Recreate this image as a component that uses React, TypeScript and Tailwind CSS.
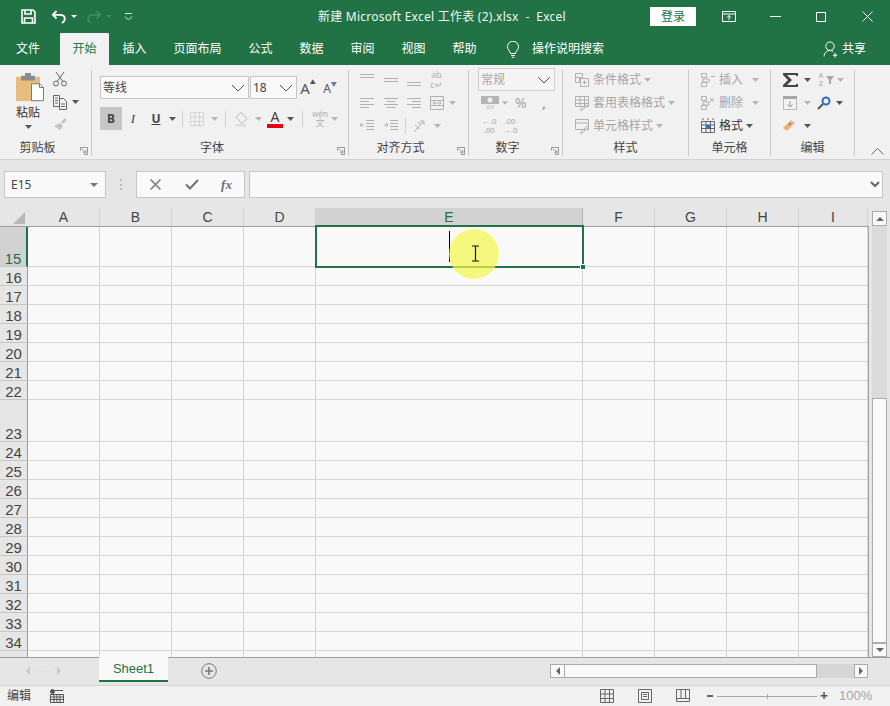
import type { ReactNode } from "react";

const columns = [
  { label: "A", width: "w-[72px]" },
  { label: "B", width: "w-[72px]" },
  { label: "C", width: "w-[72px]" },
  { label: "D", width: "w-[72px]" },
  { label: "E", width: "w-[267px]", active: true },
  { label: "F", width: "w-[72px]" },
  { label: "G", width: "w-[72px]" },
  { label: "H", width: "w-[72px]" },
  { label: "I", width: "w-[69px]" },
];

const rows = [
  { label: "15", height: "h-[40px]", active: true },
  ...["16", "17", "18", "19", "20", "21", "22"].map((label) => ({ label, height: "h-[19px]", active: false })),
  { label: "23", height: "h-[42px]", active: false },
  ...["24", "25", "26", "27", "28", "29", "30", "31", "32", "33", "34", "35"].map((label) => ({
    label,
    height: "h-[19px]",
    active: false,
  })),
];

const topTabs = ["插入", "页面布局", "公式", "数据", "审阅", "视图", "帮助"];

function Caret({ dim }: { dim?: boolean }) {
  return (
    <svg width="7" height="4" viewBox="0 0 7 4" className={dim ? "text-[#b5b5b5]" : "text-[#555555]"}>
      <path d="M0 0h7L3.5 4z" fill="currentColor" />
    </svg>
  );
}

function Chevron() {
  return (
    <svg width="14" height="8" viewBox="0 0 14 8" fill="none" stroke="#555555">
      <path d="M1 1l6 6 6-6" />
    </svg>
  );
}

function Launcher() {
  return (
    <svg width="8" height="8" viewBox="0 0 9 9" fill="none" stroke="#8a8a8a">
      <path d="M.5 4V.5H8.500V8.500H4.500" />
      <path d="M2 2l4.500 4.500M6.500 3.500v3h-3" />
    </svg>
  );
}

function Lines({ d, color = "#b0b0b0" }: { d: string; color?: string }) {
  return (
    <svg width="16" height="16" viewBox="0 0 16 16" fill="none" stroke={color}>
      <path d={d} />
    </svg>
  );
}

function Group({
  width,
  label,
  launcher,
  children,
}: {
  width: string;
  label: string;
  launcher?: boolean;
  children: ReactNode;
}) {
  return (
    <>
      <div className={`${width} relative flex h-[91px] flex-col pt-[3px]`}>
        <div className="h-[72px]">{children}</div>
        <div className={`h-[16px] text-center text-[12px] leading-[16px] text-[#444444] ${launcher ? "pr-[16px]" : ""}`}>
          {label}
        </div>
        {launcher && (
          <div className="absolute bottom-[1px] right-[3px] flex">
            <Launcher />
          </div>
        )}
      </div>
      <div className="mt-[5px] h-[86px] w-px bg-[#c8c8c8]" />
    </>
  );
}

function Row({ className = "", children }: { className?: string; children: ReactNode }) {
  return <div className={`flex h-[23px] items-center ${className}`}>{children}</div>;
}

function Slot({ width, children }: { width: string; children: ReactNode }) {
  return <div className={`${width} flex shrink-0 items-center justify-center`}>{children}</div>;
}

function TitleBar() {
  return (
    <div className="flex h-[33px] items-center bg-[#217346] text-white">
      <div className="flex w-[318px] items-center">
        <div className="ml-[21px] flex">
          <svg width="15" height="15" viewBox="0 0 15 15" fill="none" stroke="white" strokeWidth="1.6">
            <path d="M1 1h11l2 2v11H1z" />
            <path d="M4 1v4h6V1M3.500 14V9h8v5" />
          </svg>
        </div>
        <div className="ml-[15px] flex items-center gap-[4px]">
          <svg width="16" height="14" viewBox="0 0 16 14" fill="none" stroke="white" strokeWidth="1.8">
            <path d="M5.500 1L1.800 4.800l3.700 3.700M2 4.800h7c3 0 4.800 1.800 4.800 4 0 2-1.300 3.400-3 4.200" />
          </svg>
          <svg width="6" height="3" viewBox="0 0 6 3">
            <path d="M0 0h6L3 3z" fill="white" />
          </svg>
        </div>
        <div className="ml-[9px] flex items-center gap-[4px]">
          <svg width="16" height="14" viewBox="0 0 16 14" fill="none" stroke="#3f8b63" strokeWidth="1.8">
            <path d="M10.500 1l3.700 3.800-3.700 3.700M14 4.800H7c-3 0-4.800 1.800-4.800 4 0 2 1.300 3.400 3 4.200" />
          </svg>
          <svg width="6" height="3" viewBox="0 0 6 3">
            <path d="M0 0h6L3 3z" fill="#3f8b63" />
          </svg>
        </div>
        <div className="ml-[12px] flex">
          <svg width="9" height="8" viewBox="0 0 9 8" fill="none" stroke="#d5e6dc">
            <path d="M1 .5h7M1 3.500l3.500 3.500L8 3.500" />
          </svg>
        </div>
      </div>
      <div className="w-[332px] whitespace-pre text-[12px] leading-[16px] tracking-[0.25px] text-[#f1f7f3]">
        新建 Microsoft Excel 工作表 (2).xlsx  -  Excel
      </div>
      <div className="flex h-[19px] w-[46px] items-center justify-center bg-white text-[12px] text-[#217346]">登录</div>
      <div className="ml-[26px] flex">
        <svg width="14" height="11" viewBox="0 0 14 11" fill="none" stroke="white">
          <path d="M.5.5h13v10H.5zM.5 3h13M7 9V4.500M5 6.500l2-2 2 2" />
        </svg>
      </div>
      <div className="ml-[34px] h-px w-[11px] bg-white" />
      <div className="ml-[35px] h-[10px] w-[10px] border border-white" />
      <div className="ml-[36px] flex">
        <svg width="11" height="11" viewBox="0 0 11 11" stroke="white">
          <path d="M.5.5l10 10M10.500.5l-10 10" />
        </svg>
      </div>
    </div>
  );
}

function TabBar() {
  return (
    <div className="flex h-[32px] bg-[#217346] text-[12px] leading-[16px] text-white">
      <div className="flex w-[60px] items-center pl-[16px]">文件</div>
      <div className="flex w-[49px] items-center justify-center rounded-t-[1px] bg-[#f1f1f1] text-[#217346]">开始</div>
      {topTabs.map((tab) => (
        <div key={tab} className="flex items-center px-[13.5px]">
          {tab}
        </div>
      ))}
      <div className="ml-[16px] flex items-center">
        <svg width="14" height="17" viewBox="0 0 14 17" fill="none" stroke="white">
          <path d="M4.500 12.500c0-2-3-3.500-3-6.800a5.500 5.500 0 0 1 11 0c0 3.300-3 4.800-3 6.800zM5 14.500h4M5.800 16.300h2.400" />
        </svg>
      </div>
      <div className="ml-[12px] flex items-center">操作说明搜索</div>
      <div className="ml-auto mr-[24px] flex items-center gap-[3px]">
        <svg width="16" height="17" viewBox="0 0 16 17" fill="none" stroke="white">
          <path d="M7 1a4.200 4.200 0 1 1 0 8.400A4.200 4.200 0 0 1 7 1zM1 15.500c.3-3.500 2.600-6 6-6 1.300 0 2.400.3 3.200 1M12 12v4.500M9.800 14.200h4.500" />
        </svg>
        <span>共享</span>
      </div>
    </div>
  );
}

function Ribbon() {
  return (
    <div className="flex h-[95px] border-b border-[#d2d2d2] bg-[#f1f1f1] text-[12px]">
      <Group width="w-[91px]" label="剪贴板" launcher>
        <div className="flex pt-[5px]">
          <div className="flex w-[48px] flex-col items-center pl-[8px]">
            <svg width="28" height="30" viewBox="0 0 28 32" preserveAspectRatio="none" className="ml-[4px]">
              <path d="M0 4h24v26H0z" fill="#e6bd7e" />
              <path d="M5 3h14v5H5z" fill="#8c8c8c" />
              <path d="M9 0h6v4H9z" fill="#8c8c8c" />
              <path d="M15.500 11.500h8l4 4v14h-12z" fill="white" stroke="#777777" />
              <path d="M23.500 11.500v4h4" fill="none" stroke="#777777" />
            </svg>
            <div className="mt-[2px] text-[12px] leading-[16px] text-[#333333]">粘贴</div>
            <div className="mt-[4px] flex">
              <Caret />
            </div>
          </div>
          <div className="mt-[-2px] flex flex-col items-start pl-[4px]">
            <svg width="16" height="16" viewBox="0 0 16 16" fill="none" stroke="#666666">
              <path d="M4 1l6.500 9M12 1L5.500 10" />
              <circle cx="4" cy="12.500" r="2.500" />
              <circle cx="12" cy="12.500" r="2.500" />
            </svg>
            <div className="mt-[7px] flex items-center gap-[4px]">
              <svg width="16" height="16" viewBox="0 0 16 16" fill="none" stroke="#666666">
                <path d="M1.500 1.500h6v11h-6zM7.500 4.500h4l3 3v8h-7zM3 4h3M3 6.500h3M3 9h3M9 10h4M9 12.500h4" />
              </svg>
              <Caret />
            </div>
            <div className="mt-[6px] flex">
              <svg width="16" height="16" viewBox="0 0 16 16">
                <path d="M9 6l4-4 2 2-4 4zM8 7l3 3-3 4-6-4z" fill="#c4c4c4" />
              </svg>
            </div>
          </div>
        </div>
      </Group>

      <Group width="w-[256px]" label="字体" launcher>
        <div className="pl-[8px] pt-[8px]">
          <div className="flex h-[23px]">
            <div className="flex w-[149px] items-center justify-between border border-[#c6c6c6] bg-[#f9f9f9] pl-[2px] pr-[3px] text-[#444444]">
              <span>等线</span>
              <Chevron />
            </div>
            <div className="ml-[1px] flex w-[47px] items-center justify-between border border-[#c6c6c6] bg-[#f9f9f9] pl-[2px] pr-[3px] text-[#444444]">
              <span>18</span>
              <Chevron />
            </div>
            <div className="flex w-[22px] items-start justify-center pt-[2px] text-[15px] leading-[20px] text-[#555555]">
              A<span className="text-[6px] leading-[8px] text-[#555555]">▲</span>
            </div>
            <div className="flex w-[22px] items-start justify-center pt-[4px] text-[12px] leading-[18px] text-[#555555]">
              A<span className="text-[6px] leading-[8px] text-[#5f7d99]">▼</span>
            </div>
          </div>
          <div className="mt-[8px] flex h-[23px] items-center">
            <div className="flex h-[23px] w-[22px] items-center justify-center bg-[#c6c6c6] text-[12px] font-bold text-[#444444]">B</div>
            <Slot width="w-[22px]">
              <span className="font-['Liberation_Serif',serif] text-[13px] italic text-[#444444]">I</span>
            </Slot>
            <Slot width="w-[24px]">
              <span className="text-[12px] font-bold leading-[14px] text-[#444444] underline">U</span>
            </Slot>
            <Slot width="w-[8px]">
              <Caret />
            </Slot>
            <div className="ml-[6px] h-[16px] w-px bg-[#d0d0d0]" />
            <Slot width="w-[28px]">
              <svg width="14" height="14" viewBox="0 0 14 14" fill="none" stroke="#bdbdbd" strokeDasharray="1 1">
                <path d="M.5.5h13v13H.5zM.5 5h13M.5 9.500h13M5 .5v13M9.500.5v13" />
              </svg>
            </Slot>
            <Slot width="w-[7px]">
              <Caret dim />
            </Slot>
            <div className="ml-[7px] h-[16px] w-px bg-[#d0d0d0]" />
            <Slot width="w-[26px] ml-[3px]">
              <svg width="16" height="16" viewBox="0 0 16 16" fill="none" stroke="#b5b5b5">
                <path d="M7 1.500l6 6-5 5-6-6z" />
                <path d="M1 13h11v2.500H1z" fill="#dcdcdc" stroke="none" />
              </svg>
            </Slot>
            <Slot width="w-[7px]">
              <Caret dim />
            </Slot>
            <div className="ml-[5px] flex flex-col items-center">
              <span className="text-[14px] leading-[15px] text-[#444444]">A</span>
              <span className="h-[4px] w-[16px] bg-[#e60012]" />
            </div>
            <Slot width="w-[15px]">
              <Caret />
            </Slot>
            <div className="ml-[4px] h-[16px] w-px bg-[#d0d0d0]" />
            <div className="ml-[8px] flex w-[18px] flex-col items-center">
              <span className="text-[8px] leading-[9px] text-[#b0b0b0]">wén</span>
              <span className="text-[9px] leading-[10px] text-[#b0b0b0]">文</span>
            </div>
            <Slot width="w-[10px]">
              <Caret dim />
            </Slot>
          </div>
        </div>
      </Group>

      <Group width="w-[119px]" label="对齐方式" launcher>
        <div className="pl-[10px]">
          <Row>
            <Slot width="w-[16px]">
              <Lines d="M1 2.500h14M1 5.500h14" />
            </Slot>
            <Slot width="w-[23px] ml-[4px]">
              <Lines d="M1 6.500h14M1 9.500h14" />
            </Slot>
            <Slot width="w-[23px]">
              <Lines d="M1 10.500h14M1 13.500h14" />
            </Slot>
            <Slot width="w-[23px]">
              <div className="flex flex-col items-center text-[9px] leading-[10px] text-[#b0b0b0]">
                <span>ab</span>
                <span>c↵</span>
              </div>
            </Slot>
          </Row>
          <Row>
            <Slot width="w-[16px]">
              <Lines d="M1 3.500h14M1 6.500h9M1 9.500h14M1 12.500h9" />
            </Slot>
            <Slot width="w-[23px] ml-[4px]">
              <Lines d="M1 3.500h14M3.500 6.500h9M1 9.500h14M3.500 12.500h9" />
            </Slot>
            <Slot width="w-[23px]">
              <Lines d="M1 3.500h14M6 6.500h9M1 9.500h14M6 12.500h9" />
            </Slot>
            <Slot width="w-[23px]">
              <Lines d="M1.500 1.500h13v13h-13zM1.500 5.500h13M1.500 10.500h13M4 8h8M4 8l1.500-1.500M4 8l1.500 1.500M12 8l-1.500-1.500M12 8l-1.500 1.500" />
            </Slot>
            <Slot width="w-[8px]">
              <Caret dim />
            </Slot>
          </Row>
          <Row>
            <Slot width="w-[16px]">
              <Lines d="M7 2.500h8M7 5.500h8M7 8.500h8M7 11.500h8M1 7h4M1 7l2-2M1 7l2 2" />
            </Slot>
            <Slot width="w-[23px] ml-[4px]">
              <Lines d="M7 2.500h8M7 5.500h8M7 8.500h8M7 11.500h8M1 7h4M5 7L3 5M5 7L3 9" />
            </Slot>
            <div className="ml-[3px] h-[16px] w-px bg-[#d0d0d0]" />
            <Slot width="w-[26px] ml-[1px]">
              <Lines d="M2 14L12 3M12 3H8M12 3v4M3 7l4 4M6 4l3 2" />
            </Slot>
            <Slot width="w-[8px]">
              <Caret dim />
            </Slot>
          </Row>
        </div>
      </Group>

      <Group width="w-[93px]" label="数字" launcher>
        <div className="pl-[9px]">
          <div className="flex h-[23px] w-[77px] items-center justify-between border border-[#d0d0d0] bg-[#f4f4f4] pl-[2px] pr-[3px] text-[#a6a6a6]">
            <span>常规</span>
            <Chevron />
          </div>
          <Row>
            <Slot width="w-[24px]">
              <svg width="20" height="16" viewBox="0 0 20 16">
                <path d="M1 1h18v8H1z" fill="#b5b5b5" />
                <circle cx="10" cy="5" r="2.500" fill="#f1f1f1" />
                <path d="M6 11h8M6 13h8" stroke="#c8c8c8" />
              </svg>
            </Slot>
            <Slot width="w-[6px]">
              <Caret dim />
            </Slot>
            <span className="ml-[7px] w-[16px] text-[14px] leading-[16px] text-[#a6a6a6]">%</span>
            <span className="ml-[11px] text-[14px] font-bold leading-[14px] text-[#a6a6a6]">,</span>
          </Row>
          <Row>
            <div className="w-[22px] text-center font-['Liberation_Sans',sans-serif] text-[8px] leading-[9px] text-[#a6a6a6]">
              ←.0
              <br />
              .00
            </div>
            <div className="w-[20px] text-center font-['Liberation_Sans',sans-serif] text-[8px] leading-[9px] text-[#a6a6a6]">
              .00
              <br />
              →.0
            </div>
          </Row>
        </div>
      </Group>

      <Group width="w-[125px]" label="样式">
        <div className="pl-[11px] text-[#a6a6a6]">
          <Row className="gap-[3px]">
            <Lines d="M1.500 1.500h7v4h-7zM1.500 5.500h4v5h-4zM6.500 6.500h8v8h-8zM8.500 10.500h4M10.500 8.500v4" />
            <span>条件格式</span>
            <Caret dim />
          </Row>
          <Row className="gap-[3px]">
            <Lines d="M1.500 1.500h13v10h-13zM1.500 5h13M1.500 8.500h13M6 1.500v10M10.500 1.500v10M6 15l7-7 1.500 1.500-7 6z" />
            <span>套用表格格式</span>
            <Caret dim />
          </Row>
          <Row className="gap-[3px]">
            <Lines d="M1.500 1.500h13v10h-13zM1.500 5h13M6 15l7-7 1.500 1.500-7 6z" />
            <span>单元格样式</span>
            <Caret dim />
          </Row>
        </div>
      </Group>

      <Group width="w-[81px]" label="单元格">
        <div className="pl-[11px]">
          <Row className="gap-[3px] text-[#a6a6a6]">
            <Lines d="M1.500 1.500h5v4h-5zM1.500 10.500h5v4h-5zM3 7h6v3H3zM11 4.500h4" />
            <span>插入</span>
            <span className="ml-[6px] flex">
              <Caret dim />
            </span>
          </Row>
          <Row className="gap-[3px] text-[#a6a6a6]">
            <Lines d="M1.500 1.500h5v4h-5zM1.500 10.500h5v4h-5zM3 7h6v3H3zM10 3l4 4M14 3l-4 4" />
            <span>删除</span>
            <span className="ml-[6px] flex">
              <Caret dim />
            </span>
          </Row>
          <Row className="gap-[3px] text-[#333333]">
            <svg width="16" height="16" viewBox="0 0 16 16" fill="none" stroke="#666666">
              <path d="M1.500 3.500h13v11h-13zM1.500 7h13M1.500 10.500h13M6 3.500v11M10.500 3.500v11M2 1h2M7 1h2M12 1h2" />
              <path d="M6 7h4.500v3.500H6z" fill="#2b6fc2" stroke="none" />
            </svg>
            <span>格式</span>
            <Caret />
          </Row>
        </div>
      </Group>

      <Group width="w-[83px]" label="编辑">
        <div className="pl-[11px]">
          <Row>
            <svg width="17" height="16" viewBox="0 0 17 16">
              <path d="M1 1h15v3h-2V3H5l5 5-5 5h9v-1h2v3H1v-2l5-5-5-5z" fill="#444444" />
            </svg>
            <span className="ml-[5px] flex">
              <Caret />
            </span>
            <span className="ml-[5px] flex w-[10px] flex-col items-center text-[7px] leading-[8px] text-[#a6a6a6]">
              <span>A</span>
              <span>Z</span>
            </span>
            <svg width="8" height="8" viewBox="0 0 8 8">
              <path d="M0 0h8L5 4v4H3V4z" fill="#a6a6a6" />
            </svg>
            <span className="ml-[3px] flex">
              <Caret dim />
            </span>
          </Row>
          <Row>
            <svg width="16" height="16" viewBox="0 0 16 16" fill="none">
              <path d="M1.500 1.500h13v13h-13z" stroke="#bcbcbc" />
              <path d="M1 1h14v3H1z" fill="#a6a6a6" />
              <path d="M8 6v6M5.500 9.500L8 12l2.500-2.500" stroke="#9a9a9a" />
            </svg>
            <span className="ml-[6px] flex">
              <Caret dim />
            </span>
            <span className="ml-[6px] flex">
              <svg width="14" height="14" viewBox="0 0 14 14" fill="none">
                <circle cx="9" cy="5" r="3.500" stroke="#2b6fc2" strokeWidth="2" />
                <path d="M6 8l-5 5" stroke="#555555" strokeWidth="2" />
              </svg>
            </span>
            <span className="ml-[5px] flex">
              <Caret />
            </span>
          </Row>
          <Row>
            <svg width="16" height="16" viewBox="0 0 16 16">
              <path d="M1 10l8-8 4 3-8 8z" fill="#e8b56b" />
              <path d="M6 6l3-3 3 3-3 3z" fill="#c9c9c9" />
              <circle cx="8" cy="6" r="1.500" fill="#d56a7a" />
            </svg>
            <span className="ml-[6px] flex">
              <Caret />
            </span>
          </Row>
        </div>
      </Group>

      <div className="flex flex-1 items-end justify-end pb-[4px] pr-[6px]">
        <svg width="13" height="7" viewBox="0 0 13 7" fill="none" stroke="#666666">
          <path d="M.5 6.500l6-6 6 6" />
        </svg>
      </div>
    </div>
  );
}

function FormulaBar() {
  return (
    <div className="flex h-[48px] items-start bg-[#e6e6e6] pt-[11px]">
      <div className="ml-[4px] flex h-[27px] w-[102px] items-center justify-between border border-[#c6c6c6] bg-[#f9f9f9] pl-[6px] pr-[7px] text-[12px] text-[#444444]">
        <span>E15</span>
        <svg width="8" height="4" viewBox="0 0 8 4">
          <path d="M0 0h8L4 4z" fill="#777777" />
        </svg>
      </div>
      <div className="ml-[14px] mt-[8px] flex h-[11px] flex-col justify-between">
        <span className="h-[2px] w-[2px] bg-[#bdbdbd]" />
        <span className="h-[2px] w-[2px] bg-[#bdbdbd]" />
        <span className="h-[2px] w-[2px] bg-[#bdbdbd]" />
      </div>
      <div className="ml-[14px] flex h-[27px] w-[109px] items-center border border-[#c6c6c6] bg-[#f9f9f9]">
        <Slot width="w-[37px]">
          <svg width="11" height="11" viewBox="0 0 11 11" stroke="#7a7a7a" strokeWidth="1.500">
            <path d="M.5.5l10 10M10.500.5l-10 10" />
          </svg>
        </Slot>
        <Slot width="w-[35px]">
          <svg width="14" height="11" viewBox="0 0 14 11" fill="none" stroke="#6f6f6f" strokeWidth="2">
            <path d="M1 5.500l4 4 8-8.500" />
          </svg>
        </Slot>
        <Slot width="w-[35px]">
          <span className="font-['Liberation_Serif',serif] text-[13px] font-bold italic text-[#6f6f6f]">fx</span>
        </Slot>
      </div>
      <div className="ml-[4px] flex h-[27px] w-[634px] items-center justify-end border border-[#c6c6c6] bg-[#f9f9f9] pr-[2px]">
        <svg width="10" height="7" viewBox="0 0 10 7" fill="none" stroke="#666666" strokeWidth="2">
          <path d="M1 1l4 4 4-4" />
        </svg>
      </div>
    </div>
  );
}

function Sheet() {
  return (
    <div className="flex h-[449px] bg-[#e6e6e6]">
      <div className="relative w-[869px] overflow-hidden">
        <div className="flex h-[19px] border-b border-[#9c9c9c] font-['Liberation_Sans',sans-serif] text-[14px] leading-[19px]">
          <div className="flex w-[28px] items-end justify-end pb-[2px] pr-[3px]">
            <svg width="12" height="12" viewBox="0 0 12 12">
              <path d="M12 0v12H0z" fill="#b8b8b8" />
            </svg>
          </div>
          {columns.map((c) => (
            <div
              key={c.label}
              className={`${c.width} shrink-0 text-center ${
                c.active ? "border-r border-[#b5b5b5] bg-[#d2d2d2] text-[#2a6b48]" : "border-r border-[#cfcfcf] text-[#444444]"
              }`}
            >
              {c.label}
            </div>
          ))}
        </div>
        <div className="h-[430px] overflow-hidden border-r border-[#a6a6a6] font-['Liberation_Sans',sans-serif]">
          {rows.map((r) => (
            <div key={r.label} className={`flex ${r.height}`}>
              <div
                className={`flex w-[28px] shrink-0 items-end justify-center border-b border-b-[#c6c6c6] text-[15px] leading-[15px] ${
                  r.active
                    ? "border-r-2 border-r-[#217346] bg-[#d2d2d2] text-[#2a6b48]"
                    : "border-r border-r-[#9c9c9c] text-[#444444]"
                }`}
              >
                {r.label}
              </div>
              {columns.map((c) => (
                <div key={c.label} className={`${c.width} shrink-0 border-b border-r border-[#d4d4d4] bg-[#f9f9f9]`} />
              ))}
            </div>
          ))}
        </div>
        <div className="absolute left-[315px] top-[17px] h-[43px] w-[269px] border-2 border-[#217346]" />
        <div className="absolute left-[580px] top-[56px] h-[6px] w-[6px] border border-[#f9f9f9] bg-[#217346]" />
        <div className="absolute left-[449px] top-[23px] h-[31px] w-px bg-black" />
        <div className="absolute left-[449px] top-[21px] h-[50px] w-[50px] rounded-full bg-[#f5f84a]/70" />
        <div className="absolute left-[471px] top-[37px] flex">
          <svg width="9" height="17" viewBox="0 0 9 17" fill="none" stroke="#111111" strokeWidth="1.200">
            <path d="M1 1h7M1 16h7M4.500 1v15" />
          </svg>
        </div>
      </div>
      <div className="flex w-[21px] flex-col px-[3px] pt-[3px]">
        <div className="flex h-[15px] items-center justify-center border border-[#ababab] bg-[#f9f9f9]">
          <svg width="8" height="4" viewBox="0 0 8 4">
            <path d="M4 0l4 4H0z" fill="#666666" />
          </svg>
        </div>
        <div className="h-[172px] bg-[#dadada]" />
        <div className="h-[245px] border border-[#ababab] bg-[#f9f9f9]" />
        <div className="flex h-[14px] items-center justify-center border border-[#ababab] bg-[#f9f9f9]">
          <svg width="8" height="4" viewBox="0 0 8 4">
            <path d="M0 0h8L4 4z" fill="#666666" />
          </svg>
        </div>
      </div>
    </div>
  );
}

function SheetTabs() {
  return (
    <div className="flex h-[28px] items-start border-t border-[#9c9c9c] bg-[#e6e6e6]">
      <div className="flex h-[25px] w-[99px] items-center pl-[26px]">
        <svg width="36" height="8" viewBox="0 0 36 8">
          <path d="M4 0v8L0 4zM31 0l4 4-4 4z" fill="#c8c8c8" />
          <path d="M8 4h18" stroke="#dcdcdc" />
        </svg>
      </div>
      <div className="mt-[-1px] flex h-[25px] w-[69px] items-center justify-center border-b-2 border-[#217346] bg-[#f9f9f9] font-['Liberation_Sans',sans-serif] text-[13px] text-[#217346]">
        Sheet1
      </div>
      <div className="ml-[33px] mt-[5px] flex">
        <svg width="16" height="16" viewBox="0 0 16 16" fill="none" stroke="#777777">
          <circle cx="8" cy="8" r="7.300" />
          <path d="M8 4v8M4 8h8" strokeWidth="1.600" />
        </svg>
      </div>
      <div className="ml-[333px] mt-[6px] flex h-[14px] w-[318px] bg-[#d6d6d6]">
        <div className="flex w-[15px] items-center justify-center border border-[#ababab] bg-[#f9f9f9]">
          <svg width="4" height="8" viewBox="0 0 4 8">
            <path d="M4 0v8L0 4z" fill="#666666" />
          </svg>
        </div>
        <div className="w-[252px] border-y border-r border-[#ababab] bg-[#f9f9f9]" />
        <div className="flex-1" />
        <div className="flex w-[14px] items-center justify-center border border-[#ababab] bg-[#f9f9f9]">
          <svg width="4" height="8" viewBox="0 0 4 8">
            <path d="M0 0l4 4-4 4z" fill="#666666" />
          </svg>
        </div>
      </div>
    </div>
  );
}

function StatusBar() {
  return (
    <div className="flex h-[21px] items-center border-t border-[#d2d2d2] bg-[#f1f1f1] text-[12px] text-[#444444]">
      <span className="ml-[7px] w-[24px]">编辑</span>
      <span className="ml-[19px] flex">
        <svg width="14" height="14" viewBox="0 0 14 14" fill="none" stroke="#555555">
          <circle cx="2.500" cy="2.500" r="2" fill="#555555" />
          <path d="M5 1.500h8M.5 5.500h13v8H.5zM.5 8h13M.5 10.500h13M4 5.500v8M7 5.500v8M10 5.500v8" />
        </svg>
      </span>
      <span className="ml-[536px] flex">
        <svg width="14" height="14" viewBox="0 0 14 14" fill="none" stroke="#666666">
          <path d="M.5.5h13v13H.5zM.5 5h13M.5 9.500h13M5 .5v13M9.500.5v13" />
        </svg>
      </span>
      <span className="ml-[24px] flex">
        <svg width="14" height="14" viewBox="0 0 14 14" fill="none" stroke="#666666">
          <path d="M.5.5h13v13H.5zM3.500 3.500h7v7h-7zM5 5.500h4M5 7.500h4" />
        </svg>
      </span>
      <span className="ml-[24px] flex">
        <svg width="14" height="14" viewBox="0 0 14 14" fill="none" stroke="#666666">
          <path d="M.5.500h13v12H.5zM.5 9.500h13M5 .5v9M9.500.5v9" />
        </svg>
      </span>
      <span className="ml-[17px] h-[2px] w-[6px] bg-[#666666]" />
      <span className="relative ml-[4px] h-px w-[100px] bg-[#a8a8a8]">
        <span className="absolute left-1/2 top-[-2px] h-[5px] w-px bg-[#a8a8a8]" />
      </span>
      <span className="ml-[3px] text-[14px] font-bold leading-[14px] text-[#555555]">+</span>
      <span className="ml-[11px] font-['Liberation_Sans',sans-serif] text-[13px] text-[#a6a6a6]">100%</span>
    </div>
  );
}

export default function App() {
  return (
    <div className="h-[706px] w-[890px] overflow-hidden bg-[#e6e6e6] font-['Noto_Sans','Noto_Sans_CJK_SC',sans-serif]">
      <TitleBar />
      <TabBar />
      <Ribbon />
      <FormulaBar />
      <Sheet />
      <SheetTabs />
      <StatusBar />
    </div>
  );
}
